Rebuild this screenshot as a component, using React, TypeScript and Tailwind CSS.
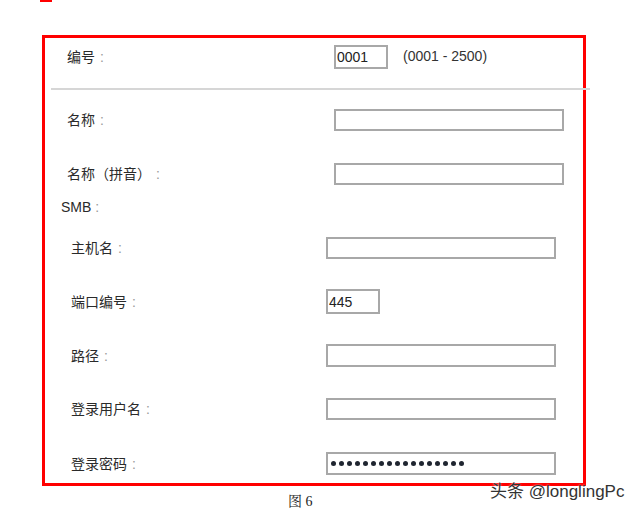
import type { ReactNode } from "react";

const font = "font-['Liberation_Sans','Noto_Sans_CJK_SC',sans-serif]";

function Label({ children, width, indent }: { children: ReactNode; width: string; indent: string }) {
  return (
    <div className={`${width} ${indent} shrink-0 text-[14px] leading-[18px] text-[#2a2a2a]`}>
      {children}
      <span className="ml-[5px] text-[#9a9a9a]">:</span>
    </div>
  );
}

function Field({ value = "", w = "w-[230px]", h = "h-[22px]" }: { value?: string; w?: string; h?: string }) {
  return (
    <input
      readOnly
      value={value}
      className={`${w} ${h} border-2 border-[#a8a8a8] bg-white px-[1px] text-[14px] text-[#222] outline-none ${font}`}
    />
  );
}

function Password({ count }: { count: number }) {
  return (
    <div className="flex h-[23px] w-[230px] items-center gap-[3px] border-2 border-[#a8a8a8] bg-white pl-[3px]">
      {Array.from({ length: count }, (_, i) => (
        <span key={i} className="h-[5px] w-[5px] rounded-full bg-[#1f2530]" />
      ))}
    </div>
  );
}

export default function App() {
  const smbRows = [
    { label: "主机名", mt: "mt-[22px]", field: <Field /> },
    { label: "端口编号", mt: "mt-[30px]", field: <Field value="445" w="w-[54px]" h="h-[25px]" /> },
    { label: "路径", mt: "mt-[30px]", field: <Field h="h-[23px]" /> },
    { label: "登录用户名", mt: "mt-[31px]", field: <Field /> },
    { label: "登录密码", mt: "mt-[32px]", field: <Password count={17} /> },
  ];

  return (
    <div className={`relative h-[514px] w-[640px] overflow-hidden bg-white ${font}`}>
      <div className="ml-[40px] h-[2px] w-[12px] bg-[#ff0000]" />

      <div className="ml-[42px] mt-[33px] h-[451px] w-[544px] border-[3px] border-[#ff0000]">
        {/* 编号 */}
        <div className="flex h-[37px] items-center">
          <Label width="w-[289px]" indent="pl-[22px]">编号</Label>
          <Field value="0001" w="w-[54px]" h="h-[24px]" />
          <span className="ml-[15px] text-[14px] text-[#333]">(0001 - 2500)</span>
        </div>

        <div className="ml-[6px] mt-[13px] h-[2px] w-[539px] bg-[#d6d6d6]" />

        {/* 名称 */}
        <div className="mt-[19px] flex items-center">
          <Label width="w-[289px]" indent="pl-[22px]">名称</Label>
          <Field />
        </div>
        <div className="mt-[32px] flex items-center">
          <Label width="w-[289px]" indent="pl-[22px]">名称（拼音）</Label>
          <Field />
        </div>

        {/* SMB */}
        <div className="mt-[14px] pl-[16px] text-[14px] leading-[16px] text-[#2a2a2a]">
          SMB<span className="ml-[4px] text-[#9a9a9a]">:</span>
        </div>

        {smbRows.map((row) => (
          <div key={row.label} className={`${row.mt} flex items-center`}>
            <Label width="w-[281px]" indent="pl-[26px]">{row.label}</Label>
            {row.field}
          </div>
        ))}
      </div>

      <div className="ml-[288px] mt-[8px] font-['Liberation_Serif','Noto_Serif_CJK_SC','Noto_Sans_CJK_SC',serif] text-[14px] leading-[16px] text-[#222]">
        图 6
      </div>

      <span className="absolute left-[490px] top-[482px] text-[17px] leading-[20px] text-[#333] [text-shadow:0_0_2px_#fff]">
        头条 @longlingPc
      </span>
    </div>
  );
}
